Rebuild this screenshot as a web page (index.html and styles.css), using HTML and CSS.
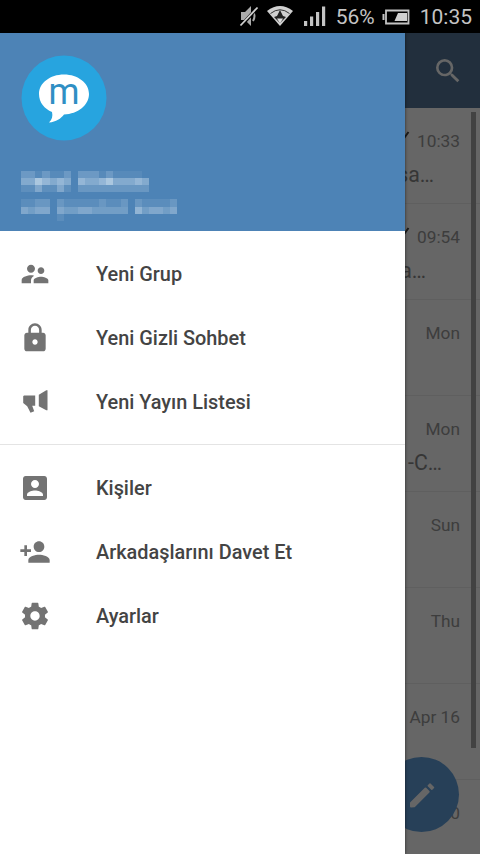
FILE: index.html
```html
<!DOCTYPE html>
<html lang="tr">
<head>
    <meta charset="UTF-8">
    <meta name="viewport" content="width=device-width, initial-scale=1.0">
    <title>Menü</title>
    <link rel="stylesheet" href="styles.css">
</head>
<body>
    <header class="durum">
        <svg class="sessiz" width="20" height="22" viewBox="0 0 20 22">
            <path d="M2 7h4l6-6v20l-6-6H2z" fill="#aaa"/>
            <path d="M14 6q3 5 0 10" fill="none" stroke="#aaa" stroke-width="2"/>
            <path d="M2 21L19 2" stroke="#000" stroke-width="3.400"/>
            <path d="M1.500 20.500L18.500 2.500" stroke="#d0d0d0" stroke-width="1.800"/>
        </svg>
        <svg class="wifi" width="28" height="22" viewBox="0 0 28 22">
            <path d="M1 6Q14-4 27 6L14 21z" fill="#d0d0d0"/>
            <path d="M4.500 8.500Q14 1 23.500 8.500" fill="none" stroke="#333" stroke-width="1"/>
            <path d="M14 5l3 6 3 1-6 6-6-6 3-1z" fill="#222"/>
            <path d="M11 13.500h6l-3 5z" fill="#e0e0e0"/>
        </svg>
        <svg class="sinyal" width="22" height="22" viewBox="0 0 22 22">
            <path d="M0 16h3.200v5H0zM6 11.500h3.200V21H6zM12 7h3.200v14H12zM18 1.500h3.200V21H18z" fill="#c4c4c4"/>
        </svg>
        <span class="yuzde">56%</span>
        <svg class="pil" width="28" height="16" viewBox="0 0 28 16">
            <path d="M4 1.500h22.500v13H4z" fill="none" stroke="#c4c4c4" stroke-width="1.800"/>
            <path d="M.500 5h2v6h-2z" fill="#c4c4c4"/>
            <path d="M16 4h9v8H12.500z" fill="#d0d0d0"/>
        </svg>
        <span class="saat">10:35</span>
    </header>

    <main class="ekran">
        <section class="sohbetler">
            <div class="ust-bar">
                <svg width="32" height="32" viewBox="0 0 24 24"><path fill="#fff" d="M15.500 14h-.79l-.28-.27A6.471 6.471 0 0 0 16 9.500 6.500 6.500 0 1 0 9.500 16c1.610 0 3.090-.59 4.230-1.570l.27.28v.79l5 4.990L20.490 19l-4.990-5zm-6 0C7.010 14 5 11.990 5 9.500S7.010 5 9.500 5 14 7.010 14 9.500 11.990 14 9.500 14z"/></svg>
            </div>
            <article class="sohbet">
                <p class="zaman"><svg class="tik" width="14" height="16" viewBox="0 0 14 16"><path d="M1 6l4 4 6.500-9"/></svg>10:33</p>
                <p class="mesaj mesaj-1">sa…</p>
            </article>
            <article class="sohbet">
                <p class="zaman"><svg class="tik" width="14" height="16" viewBox="0 0 14 16"><path d="M1 6l4 4 6.500-9"/></svg>09:54</p>
                <p class="mesaj mesaj-2">a…</p>
            </article>
            <article class="sohbet"><p class="zaman">Mon</p></article>
            <article class="sohbet">
                <p class="zaman">Mon</p>
                <p class="mesaj mesaj-4">-C…</p>
            </article>
            <article class="sohbet"><p class="zaman">Sun</p></article>
            <article class="sohbet"><p class="zaman">Thu</p></article>
            <article class="sohbet"><p class="zaman">Apr 16</p></article>
            <article class="sohbet"><p class="zaman">0</p></article>
            <div class="kaydirma"></div>
            <div class="yaz">
                <svg width="32" height="32" viewBox="0 0 32 32">
                    <path d="M5 24L19.500 9.500l3.200 3.200L8.200 27.200 5 27.500z" fill="#fff" stroke="#fff" stroke-width="2" stroke-linejoin="round"/>
                    <path d="M22.300 6.700l1.700-1.700 3.500 3.500-1.700 1.700z" fill="#fff" stroke="#fff" stroke-width="1.500" stroke-linejoin="round"/>
                </svg>
            </div>
        </section>
        <div class="perde"></div>

        <aside class="menu">
            <div class="profil">
                <svg class="avatar" width="86" height="86" viewBox="0 0 86 86">
                    <circle cx="43" cy="43" r="42.500" fill="#27a4df"/>
                    <path d="M43 19.500c14 0 25 8.500 25 19.500S57 59 43 59.500c-3 4-8 7.500-15 8 3-3 4-6 3-10.500C23.500 54 18 47.500 18 39c0-11 11-19.500 25-19.500z" fill="#fff"/>
                    <text class="harf" x="27.500" y="49" textLength="31" lengthAdjust="spacingAndGlyphs">m</text>
                </svg>
                <!-- gizlenmiş ad ve durum -->
                <svg class="gizli" width="160" height="50" viewBox="0 0 22.500 7.040" shape-rendering="crispEdges" fill="#dceaf5">
                    <g class="satir-ad">
                        <path opacity=".22" d="M0 0h2v1H0zM3 0h1v1H3zM6 0h1v1H6zM8 0h3v1H8zM12 0h1v1h-1z"/>
                        <path opacity=".08" d="M2 0h1v1H2zM4 0h2v1H4zM11 0h1v1h-1zM13 0h4v1h-4z"/>
                        <path opacity=".38" d="M0 1h2v1H0zM4 1h1v1H4zM6 1h1v1H6zM9 1h2v1H9zM13 1h3v1h-3zM17 1h1v1h-1z"/>
                        <path opacity=".5" d="M3 1h1v1H3zM5 1h1v1H5zM8 1h1v1H8zM11 1h1v1h-1zM16 1h1v1h-1z"/>
                        <path opacity=".66" d="M2 1h1v1H2zM12 1h1v1h-1z"/>
                        <path opacity=".12" d="M0 2h2v1H0zM3 2h2v1H3zM6 2h1v1H6z"/>
                        <path opacity=".36" d="M2 2h1v1H2zM5 2h1v1H5z"/>
                        <path opacity=".2" d="M8 2h10v1H8z"/>
                    </g>
                    <g class="satir-durum">
                        <path opacity=".2" d="M2 4h2v1H2zM5 4h1v1H5zM11 4h1v1h-1zM14 4h1v1h-1zM16 4h1v1h-1zM21 4h1v1h-1z"/>
                        <path opacity=".1" d="M0 4h2v1H0zM6 4h5v1H6zM12 4h2v1h-2zM17 4h4v1h-4zM5 6h1v1H5z"/>
                        <path opacity=".26" d="M1 5h1v1H1zM6 5h2v1H6zM10 5h5v1h-5zM17 5h1v1h-1zM20 5h1v1h-1z"/>
                        <path opacity=".36" d="M0 5h1v1H0zM2 5h2v1H2zM5 5h1v1H5zM8 5h2v1H8zM18 5h2v1h-2zM21 5h1v1h-1z"/>
                        <path opacity=".48" d="M16 5h1v1h-1z"/>
                    </g>
                </svg>
            </div>
            <nav class="liste">
                <a class="oge">
                    <svg width="32" height="32" viewBox="0 0 24 24"><path d="M16.500 12c1.380 0 2.490-1.120 2.490-2.500S17.880 7 16.500 7 14 8.120 14 9.500s1.120 2.500 2.500 2.500zM9 11c1.660 0 2.990-1.340 2.990-3S10.660 5 9 5 6 6.340 6 8s1.340 3 3 3zm7.500 3c-1.830 0-5.500.92-5.500 2.750V19h11v-2.250c0-1.830-3.670-2.750-5.500-2.750zM9 13c-2.330 0-7 1.170-7 3.500V19h7v-2.250c0-.85.33-2.340 2.370-3.470C10.500 13.100 9.660 13 9 13z"/></svg>
                    Yeni Grup
                </a>
                <a class="oge">
                    <svg width="32" height="32" viewBox="0 0 24 24"><path d="M18 8h-1V6c0-2.760-2.240-5-5-5S7 3.240 7 6v2H6c-1.100 0-2 .9-2 2v10c0 1.100.9 2 2 2h12c1.100 0 2-.9 2-2V10c0-1.100-.9-2-2-2zm-6 9c-1.100 0-2-.9-2-2s.9-2 2-2 2 .9 2 2-.9 2-2 2zm3.100-9H8.900V6c0-1.710 1.390-3.100 3.100-3.100s3.100 1.390 3.100 3.100v2z"/></svg>
                    Yeni Gizli Sohbet
                </a>
                <a class="oge">
                    <svg width="32" height="32" viewBox="0 0 32 32"><path d="M5 9.500h11.200v10.200h-3l2 5.500-3.700 1.500-3.300-6.500L4.200 17v-6.700zM19.800 8.700l7.500-4.500h1.200v20h-1.200l-7.500-4z"/></svg>
                    Yeni Yayın Listesi
                </a>
                <hr class="ayrac">
                <a class="oge">
                    <svg width="32" height="32" viewBox="0 0 24 24"><path d="M3 5v14c0 1.100.89 2 2 2h14c1.100 0 2-.9 2-2V5c0-1.100-.9-2-2-2H5c-1.110 0-2 .9-2 2zm12 4c0 1.660-1.340 3-3 3s-3-1.340-3-3 1.340-3 3-3 3 1.340 3 3zm-9 8c0-2 4-3.100 6-3.100s6 1.100 6 3.100v1H6v-1z"/></svg>
                    Kişiler
                </a>
                <a class="oge">
                    <svg width="32" height="32" viewBox="0 0 24 24"><path d="M15 12c2.210 0 4-1.790 4-4s-1.790-4-4-4-4 1.790-4 4 1.790 4 4 4zm-9-2V7H4v3H1v2h3v3h2v-3h3v-2H6zm9 4c-2.670 0-8 1.340-8 4v2h16v-2c0-2.660-5.330-4-8-4z"/></svg>
                    Arkadaşlarını Davet Et
                </a>
                <a class="oge">
                    <svg width="32" height="32" viewBox="0 0 24 24"><path d="M19.430 12.980c.04-.32.07-.64.07-.98s-.03-.66-.07-.98l2.110-1.650c.19-.15.24-.42.12-.64l-2-3.460c-.12-.22-.39-.3-.61-.22l-2.490 1c-.52-.4-1.080-.73-1.690-.98l-.38-2.650C14.460 2.180 14.250 2 14 2h-4c-.25 0-.46.18-.49.42l-.38 2.650c-.61.25-1.170.59-1.690.98l-2.490-1c-.23-.09-.49 0-.61.22l-2 3.460c-.13.22-.07.49.12.64l2.110 1.650c-.04.32-.07.65-.07.98s.03.66.07.98l-2.110 1.650c-.19.15-.24.42-.12.64l2 3.460c.12.22.39.3.61.22l2.490-1c.52.4 1.080.73 1.690.98l.38 2.650c.03.24.24.42.49.42h4c.25 0 .46-.18.49-.42l.38-2.650c.61-.25 1.170-.59 1.690-.98l2.490 1c.23.09.49 0 .61-.22l2-3.460c.12-.22.07-.49-.12-.64l-2.110-1.650zM12 15.500c-1.930 0-3.500-1.570-3.500-3.500s1.570-3.500 3.500-3.500 3.500 1.570 3.500 3.500-1.570 3.500-3.500 3.500z"/></svg>
                    Ayarlar
                </a>
            </nav>
        </aside>
    </main>
</body>
</html>
```
FILE: styles.css
```css
* {
    box-sizing: border-box;
}

body {
    margin: 0;
    height: 854px;
    overflow: hidden;
    display: flex;
    flex-direction: column;
    background-color: #000;
    font-family: Roboto, "Noto Sans", sans-serif;
}

p {
    margin: 0;
}

/* Barra de estado */
.durum {
    height: 33px;
    flex: none;
    display: flex;
    align-items: center;
    justify-content: flex-end;
    padding: 1px 8px 0 0;
    color: #c4c4c4;
    font-size: 21px;
}

.durum svg {
    margin-bottom: 2px;
}

.wifi {
    margin-left: 7px;
}

.sinyal {
    margin-left: 10px;
}

.yuzde {
    margin-left: 10px;
}

.pil {
    margin: 2px 10px 0 7px;
}

.ekran {
    flex: 1;
    position: relative;
    overflow: hidden;
}

/* Sohbet listesi */
.sohbetler {
    height: 100%;
    background-color: #fff;
}

.ust-bar {
    height: 75px;
    display: flex;
    align-items: center;
    justify-content: flex-end;
    padding-right: 16px;
    background-color: #557799;
}

.sohbet {
    height: 96px;
    padding: 21px 20px 0 0;
    border-bottom: 1px solid #eee;
    text-align: right;
    color: #888;
}

.zaman {
    font-size: 17.3px;
    line-height: 24px;
    color: #999;
}

.tik {
    margin-right: 6px;
    fill: none;
    stroke: #444;
    stroke-width: 2;
}

.mesaj {
    margin-top: 8px;
    font-size: 21.3px;
    line-height: 28px;
}

.mesaj-1 {
    padding-right: 26px;
}

.mesaj-2 {
    padding-right: 34px;
}

.mesaj-4 {
    padding-right: 18px;
}

.kaydirma {
    position: absolute;
    top: 79px;
    right: 4px;
    width: 5px;
    height: 636px;
    background-color: #a5a5a5;
}

.yaz {
    position: absolute;
    right: 21px;
    bottom: 22px;
    width: 75px;
    height: 75px;
    border-radius: 50%;
    display: flex;
    align-items: center;
    justify-content: center;
    background-color: #62a0dc;
}

.perde {
    position: absolute;
    inset: 0;
    background-color: rgba(0, 0, 0, 0.6);
}

/* Yan menü */
.menu {
    position: absolute;
    top: 0;
    left: 0;
    width: 405px;
    height: 100%;
    background-color: #fff;
    box-shadow: 0 0 3px rgba(0, 0, 0, 0.6);
}

.profil {
    height: 198px;
    padding: 22px 0 0 21px;
    display: flex;
    flex-direction: column;
    gap: 30px;
    background-color: #4d83b6;
}

.harf {
    font-family: Roboto, sans-serif;
    font-size: 37px;
    fill: #2f8fc4;
}

.liste {
    padding-top: 11px;
}

.oge {
    height: 64px;
    display: flex;
    align-items: center;
    gap: 45px;
    padding-left: 19px;
    font-size: 19.9px;
    font-weight: 500;
    color: #444;
}

.oge svg {
    margin-left: -0.5px;
    margin-right: 0.5px;
    fill: #737373;
}

.ayrac {
    margin: 10px 0 11px;
    border: 0;
    height: 1px;
    background-color: #e4e4e4;
}
```
